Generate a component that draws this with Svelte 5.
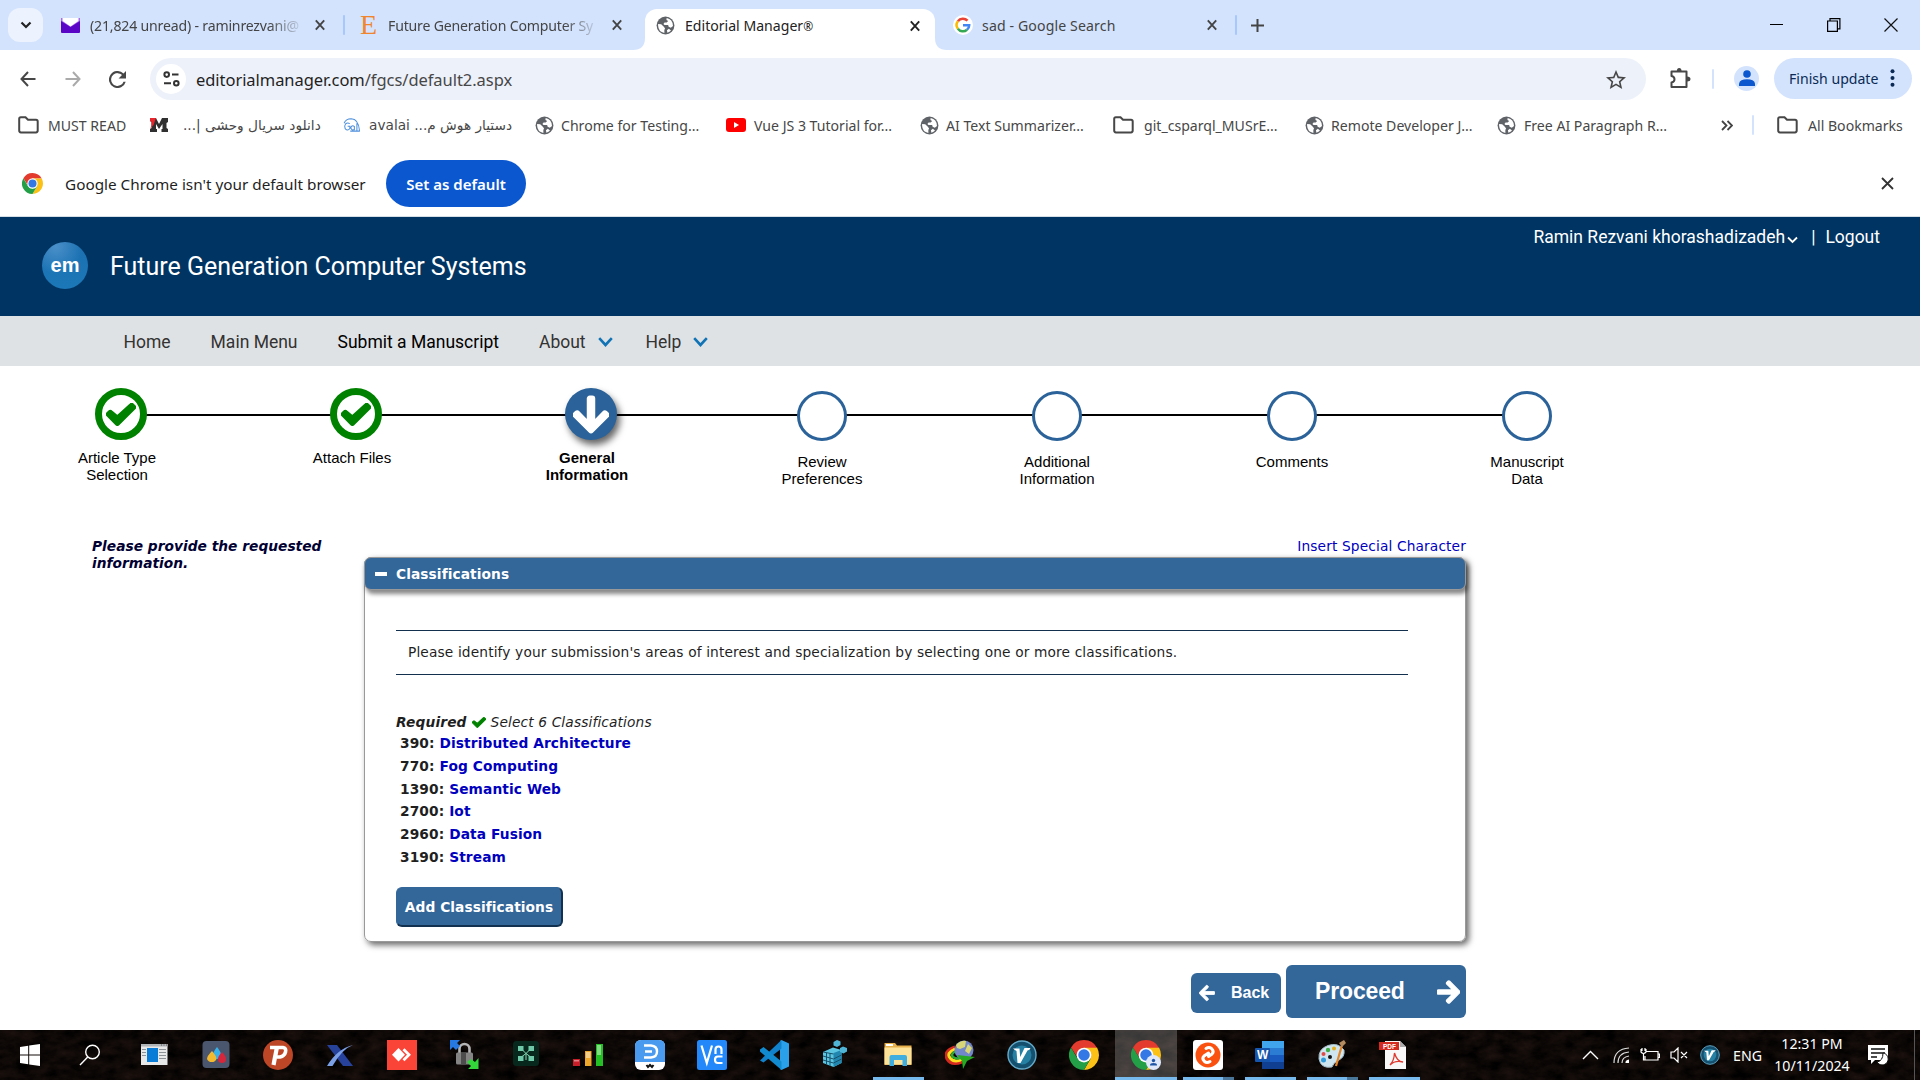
<script>
  const bookmarks = [
    { icon: 'folder', text: 'MUST READ', slot: 30 },
    { icon: 'm', text: 'دانلود سریال وحشی |...', slot: 33, rtl: true },
    { icon: 'gai', text: 'دستیار هوش م... avalai', slot: 27, rtl: true },
    { icon: 'globe', text: 'Chrome for Testing...', slot: 26 },
    { icon: 'youtube', text: 'Vue JS 3 Tutorial for...', slot: 28 },
    { icon: 'globe', text: 'AI Text Summarizer...', slot: 26 },
    { icon: 'folder', text: 'git_csparql_MUSrE...', slot: 31 },
    { icon: 'globe', text: 'Remote Developer J...', slot: 26 },
    { icon: 'globe', text: 'Free AI Paragraph R...', slot: 27 }
  ];

  const steps = [
    { state: 'done', lines: ['Article Type', 'Selection'] },
    { state: 'done', lines: ['Attach Files'] },
    { state: 'current', lines: ['General', 'Information'] },
    { state: 'todo', lines: ['Review', 'Preferences'] },
    { state: 'todo', lines: ['Additional', 'Information'] },
    { state: 'todo', lines: ['Comments'] },
    { state: 'todo', lines: ['Manuscript', 'Data'] }
  ];

  const classes = [
    ['390', 'Distributed Architecture'],
    ['770', 'Fog Computing'],
    ['1390', 'Semantic Web'],
    ['2700', 'Iot'],
    ['2960', 'Data Fusion'],
    ['3190', 'Stream']
  ];

  const apps = [
    { icon: 'window' },
    { icon: 'drops' },
    { icon: 'psiphon' },
    { icon: 'xmanager' },
    { icon: 'anydesk' },
    { icon: 'lock' },
    { icon: 'network' },
    { icon: 'bars' },
    { icon: 'dict' },
    { icon: 'vnc' },
    { icon: 'code' },
    { icon: 'cubes' },
    { icon: 'explorer', run: true },
    { icon: 'idm' },
    { icon: 'v' },
    { icon: 'chrome' },
    { icon: 'chromeuser', active: true },
    { icon: 'orange', run: true, multi: true },
    { icon: 'word', run: true },
    { icon: 'paint', run: true, multi: true },
    { icon: 'pdf', run: true }
  ];
</script>

{#snippet chromeLogo()}
  <path d="M1.600 6 7 14.500 12 6.300H22.500A12 12 0 0 0 1.600 6Z" fill="#e33b2e" />
  <path d="M12 6.200H22.500A12 12 0 0 1 12 24L17.200 15Z" fill="#fbc116" />
  <path d="M1.600 6 6.900 15 12 17.800 17.200 15 12 24A12 12 0 0 1 1.600 6Z" fill="#23a047" />
  <circle cx="12" cy="12" r="5.900" fill="#fff" />
  <circle cx="12" cy="12" r="4.600" fill="#3478e5" />
{/snippet}

{#snippet arrow()}
  <path fill="#fff" stroke="#fff" stroke-width="26" d="M413.1 222.5l22.2 22.2c9.4 9.4 9.4 24.6 0 33.9L241 473c-9.4 9.4-24.6 9.4-33.9 0L12.7 278.6c-9.4-9.4-9.4-24.6 0-33.9l22.2-22.2c9.5-9.5 25-9.3 34.3.4L184 343.4V56c0-13.3 10.7-24 24-24h32c13.3 0 24 10.7 24 24v287.4l114.8-120.5c9.3-9.800 24.8-10 34.3-.4z" />
{/snippet}

{#snippet check()}
  <svg class="check" viewBox="-8 58 528 398" fill="#008200" stroke="#008200" stroke-width="40"><path d="M173.898 430l-160-160c-9.997-9.997-9.997-22 0-32l36.203-36.204c9.997-9.998 26.207-9.998 36.204 0L192 290 425 78c9.997-9.997 26.207-9.997 36.204 0l36.203 36.204c9.997 9.997 9.997 22 0 32L210.101 430c-9.998 9.997-26.207 9.997-36.204 0z" /></svg>
{/snippet}

{#snippet cross()}
  <svg width="10" height="12" viewBox="0 0 10 12"><path d="M.8 1.400 9.200 10.600M9.200 1.400.8 10.600" stroke="currentColor" stroke-width="1.900" /></svg>
{/snippet}

{#snippet small(name)}
  {#if name === 'folder'}
    <svg width="21" height="18" viewBox="0 0 21 18" fill="none" stroke="#474747" stroke-width="2"><path d="M1.200 2.800Q1.200 1.200 2.800 1.200H7.500L10 3.800H18Q19.700 3.800 19.700 5.400V14.600Q19.700 16.400 18 16.400H2.900Q1.200 16.400 1.200 14.600Z" /></svg>
  {:else if name === 'globe'}
    <svg width="19" height="19" viewBox="0 0 20 20"><circle cx="10" cy="10" r="9.400" fill="#5f6368" /><path d="M2.200 8.300 5.500 8.600 8.500 11.600 9.600 13.500 8.800 14.500V17.800Q2.500 16.800 2.200 10ZM11.200 2.100Q17.500 3.200 17.900 10.400L15.600 12.400 13.300 11.400 12.800 9.600H9L7.800 8.400 9 6.800H11.200L12.800 5.300 11 4.200ZM13.500 13.500 15.800 15.300Q14.500 16.800 12 17.600L11.500 15Z" fill="#fff" /></svg>
  {:else if name === 'm'}
    <svg width="18" height="14" viewBox="0 0 18 14"><path d="M0 0H6L9 6 12 0H18V4L16.500 5V10L18 11V14H11.500V11H12.500V6L9 11 6 6V11H7V14H0V11L1.500 10V4L0 3Z" fill="#303030" /><path d="M0 0H6L3.500 7 0 11 1.500 8V4L0 3Z" fill="#e8262b" /></svg>
  {:else if name === 'gai'}
    <svg width="20" height="14" viewBox="0 0 20 16" fill="none" stroke="#4f90dc" stroke-width="1.200"><path d="M7.500 6.500Q5 4.800 2.800 6.600 .8 9 2.200 12.200 5 15.400 7.600 12V9.500H5M1 6Q3 .8 9 .8 17.500 1 18.600 14.500M12.500 9.500A2.300 2.300 0 1 0 12.500 13M12.700 9V14M15.600 6V14.500M8 15H19" /></svg>
  {:else if name === 'youtube'}
    <svg width="20" height="14" viewBox="0 0 20 14"><rect width="20" height="14" rx="3" fill="#f00" /><path d="M8 4 13 7 8 10Z" fill="#fff" /></svg>
  {/if}
{/snippet}

{#snippet app(name)}
  <svg width="30" height="30" viewBox="0 0 30 30">
    {#if name === 'window'}
      <path d="M2 4H28.500V25H2Z" fill="#e8e8e8" /><path d="M2 4H28.500V6.500H2Z" fill="#b0b3b6" /><path d="M22 5H23M24.500 5H25.500M27 5H28" stroke="#555" /><path d="M3 9.500H7M3 12.500H7M3 15.500H7M20 9.500H27M20 12.500H27M20 15.500H27M20 18.500H27" stroke="#8d9297" stroke-width="1.200" /><rect x="8" y="8" width="11" height="14" fill="#087cd7" />
    {:else if name === 'drops'}
      <rect x="1.500" y="1" width="27" height="27" rx="4" fill="#4a566d" /><path d="M16 7Q20 12 20 15A4 4 0 0 1 12 15Q12 12 16 7" fill="#36b1ea" /><path d="M21 12Q25 16 25 19A4 4 0 0 1 17 19Q17 16 21 12" fill="#d5263b" /><path d="M11 11Q15.500 16 15.500 19A5 4.500 0 0 1 6 19Q6 16 11 11" fill="#f3b92f" />
    {:else if name === 'psiphon'}
      <circle cx="15" cy="15" r="15" fill="#bd4627" /><path d="M7 7.500H20Q23.500 8 22.500 12T17 17H14" fill="none" stroke="#fff" stroke-width="3.600" /><path d="M14 7 10.500 25" stroke="#fff" stroke-width="4.200" />
    {:else if name === 'xmanager'}
      <path d="M2 5H12L28 26H18Z" fill="#27429a" /><path d="M28 5Q17 9 7.500 26H2Q12 9 28 5" fill="#7ba0e8" />
    {:else if name === 'anydesk'}
      <path d="M0 0H30V30H0Z" fill="#fb4438" /><path d="M11.500 8 18 14.700 11.500 21.400 5 14.700Z" fill="#fff" /><path d="M16.500 9.200 22 14.700 16.500 20.200" stroke="#fff" stroke-width="2.800" fill="none" />
    {:else if name === 'lock'}
      <path d="M10.500 13V9A5 5 0 0 1 20.500 9V13" fill="none" stroke="#b5b5b5" stroke-width="2.600" /><rect x="7" y="12.500" width="17" height="12" rx="1.500" fill="#848484" /><path d="M12 12.500H17V24.500H12Z" fill="#4d4d4d" /><path d="M1 0H11L8 3 11 6 7 10 4 7 1 10Z" fill="#2679e3" /><path d="M29.500 29H19L22 26 18 22 22 19 26 22 29.500 18Z" fill="#34d73b" />
    {:else if name === 'network'}
      <rect x="2" y="1" width="26" height="25" rx="3.500" fill="#06281d" /><path d="M10 8.500 15 13.500 20 8.500M15 13.500V20M9 18 15 13.500 21 18" stroke="#85d9b6" fill="none" /><path d="M7 6H12.500V11H7ZM17.500 6H23V11H17.500ZM7 16H12.500V21H7ZM17.500 16H23V21H17.500Z" fill="#6fc9a9" />
    {:else if name === 'bars'}
      <path d="M0 19H7V26H0Z" fill="#c81e2a" /><path d="M12 11H18.500V26H12Z" fill="#eea62a" /><path d="M23 4H30V26H23Z" fill="#23bf24" /><path d="M1 20H6V21.500H1ZM13 12H17.500V18H13ZM24 5H28V15H24Z" fill="#ffffff70" />
    {:else if name === 'dict'}
      <rect width="30" height="30" rx="6" fill="#fff" /><path d="M0 22V6Q0 0 6 0H24Q30 0 30 6V22Z" fill="#4a9bef" /><path d="M9 5.500H16Q22 6 22 11.500T16 17.500H9M10 11.500H17" stroke="#fff" stroke-width="2.400" fill="none" /><path d="M11.500 25 13 27 15 25 17 27 18.500 25" stroke="#111" stroke-width="2" fill="none" />
    {:else if name === 'vnc'}
      <rect width="30" height="30" rx="2.500" fill="#2389fa" /><path d="M4.500 5.500 9.800 23 15 5.500M18.500 14V9.500Q18.500 6.500 21.500 6.500T24.500 9.500V14M25.500 16.500H21Q18 16.500 18 19.800T21 23H25.500" stroke="#fff" stroke-width="2.200" fill="none" />
    {:else if name === 'code'}
      <path d="M22.500 0 30 3.500V26.500L22.500 30 21 29V1Z" fill="#2ba0ea" /><path d="M1 20.500 22.500 0V8.500L4.500 22.500Z" fill="#1181cc" /><path d="M1 9.500 4.500 7 22.500 21.500V30L1 11.500Z" fill="#128ad0" />
    {:else if name === 'cubes'}
      <path d="M2 12 12 7.500 20.500 10V23L12.500 27 2 23Z" fill="#5cc6e2" /><path d="M12.500 13 20.500 10V23L12.500 27Z" fill="#2187b1" /><path d="M5.500 13V24M9 13V26M2 16 12.500 19 20.500 15M2 20 12.500 23 20.500 19M2 12 12.500 14" stroke="#16506b" fill="none" /><path d="M12.500 2 16 0 19.500 1.500V5L16 7 12.500 5.500ZM19 8 22 6.500 26 8V11.500L22.500 13.500 19 12Z" fill="#4fb5d6" />
    {:else if name === 'explorer'}
      <path d="M1.500 3H12L14 5.500H28.500V25H1.500Z" fill="#e8b04b" /><path d="M3 4H10V6H3Z" fill="#fff" /><path d="M1.500 7.500H28.500V24.500H1.500Z" fill="#fde39a" /><path d="M6.500 26V17Q6.500 15 8.500 15H22Q24 15 24 17V26H19.500V20H11V26Z" fill="#41aee0" />
    {:else if name === 'idm'}
      <path d="M10 7Q-2 11 2 19 6 26 17 22" stroke="#d52a20" stroke-width="3" fill="none" /><path d="M10 9Q1 13 5 18 9 23 17 19.500" stroke="#ffde22" stroke-width="3" fill="none" /><path d="M11 11Q5 14 8 17 12 20 18 17" stroke="#2cad35" stroke-width="2.500" fill="none" /><circle cx="19" cy="10" r="9.500" fill="#7187c9" /><path d="M11 5Q16 0 21 1L20 7 15 9 12 8ZM23 4 27 8 24 14 20 11Z" fill="#d8d676" /><path d="M12 15 30 17 22 21 18 29 17 21Z" fill="#27a921" />
    {:else if name === 'v'}
      <circle cx="15" cy="15" r="14" fill="#15506f" stroke="#63aac9" stroke-width="1.400" /><circle cx="15" cy="15" r="9.500" fill="#2580a3" /><path d="M6 8.500H12.500L13.200 17 17.500 8H23.500Q23 10 20.500 10.500L13.500 23H10.500L9.500 11Q8 10 6 8.500Z" fill="#fff" />
    {:else if name === 'chrome'}
      <g transform="scale(1.25)">{@render chromeLogo()}</g>
    {:else if name === 'chromeuser'}
      <g transform="scale(1.25)">{@render chromeLogo()}</g><circle cx="22.500" cy="22.500" r="7.500" fill="#dfe8fa" /><circle cx="22.500" cy="20.500" r="1.700" fill="#1f55a5" /><path d="M19 25.500V25Q19 23 22.500 23T26 25V25.500Z" fill="#1f55a5" />
    {:else if name === 'orange'}
      <rect width="30" height="30" rx="3" fill="#fff" /><circle cx="15" cy="15" r="12.500" fill="#fb5110" /><path d="M13 8.500Q16 6.500 18.500 8.500 21.500 11.500 19 14L15.500 16.500M17 21.500Q14 23.500 11.500 21.500 8.500 18.500 11 16L15.500 13" stroke="#fff" stroke-width="3" stroke-linecap="round" fill="none" />
    {:else if name === 'word'}
      <path d="M7 1H29V29H7Z" fill="#2b7cd3" /><path d="M7 1H29V8H7Z" fill="#41a5ee" /><path d="M7 15H29V22H7Z" fill="#185abd" /><path d="M7 22H29V29H7Z" fill="#103f91" /><rect x="0" y="8" width="15" height="14" rx="1" fill="#1655ae" /><text x="2" y="19" fill="#fff" class="word">W</text>
    {:else if name === 'paint'}
      <path d="M2 19Q1 9 11 5.500T27 10Q28 17 22 20T15 27Q4 29 2 19" fill="#cfe5f0" stroke="#a5bcc5" /><circle cx="6.500" cy="14" r="2" fill="#df4c48" /><circle cx="11" cy="10" r="2.200" fill="#41ac47" /><circle cx="6.500" cy="20" r="2.500" fill="#329bdb" /><circle cx="17" cy="8.500" r="2" fill="#e3ae21" /><circle cx="13" cy="17" r="2" fill="#151515" /><path d="M25 5 19 26" stroke="#e28629" stroke-width="2.200" /><path d="M22 3 27 0 29 3 25 7Z" fill="#b58c60" />
    {:else if name === 'pdf'}
      <path d="M6 1H21L27 7V29H6Z" fill="#f8f8f8" /><path d="M21 1V7H27Z" fill="#aaa" /><rect y="2" width="20" height="8" fill="#d32c21" /><text x="4" y="8.500" fill="#fff" class="pdf">PDF</text><path d="M11 25Q15 21 15.500 13 18 22 24 22 16 20 11 25" fill="none" stroke="#df3a30" stroke-width="1.300" />
    {/if}
  </svg>
{/snippet}

<div class="screen">
  <header class="tabs">
    <div class="tabsearch"><svg width="12" height="9" viewBox="0 0 12 9"><path d="M1.500 1.500 6 6 10.500 1.500" fill="none" stroke="#222" stroke-width="2.200" /></svg></div>
    <div class="tab mail">
      <svg width="19" height="15" viewBox="0 0 19 15"><rect width="19" height="15" rx="1" fill="#5b06c6" /><path d="M0 0H19V3L9.500 9 0 3Z" fill="#a767ee" /><path d="M1.500 0H17.500V3L9.500 8.500 1.500 3Z" fill="#fff" /></svg>
      <span class="title fade">(21,824 unread) - raminrezvani@</span>{@render cross()}
    </div>
    <i class="sep"></i>
    <div class="tab elsevier"><span class="e">E</span><span class="title fade">Future Generation Computer Sy</span>{@render cross()}</div>
    <div class="tab front">
      <svg class="curve left" width="12" height="12"><path d="M12 0V12H0Q12 12 12 0" fill="#fff" /></svg>
      {@render small('globe')}<span class="title">Editorial Manager<span class="reg">®</span></span>{@render cross()}
      <svg class="curve right" width="12" height="12"><path d="M0 0V12H12Q0 12 0 0" fill="#fff" /></svg>
    </div>
    <div class="tab google">
      <svg width="20" height="20" viewBox="0 0 20 20"><circle cx="10" cy="10" r="10" fill="#fff" /><g fill="none" stroke-width="2.500"><path d="M4.900 6.200A6.200 6.200 0 0 1 14.500 5.700" stroke="#ea4335" /><path d="M4.900 13.700A6.200 6.200 0 0 1 4.900 6.200" stroke="#fbbc05" /><path d="M14 14.700A6.200 6.200 0 0 1 4.900 13.700" stroke="#34a853" /><path d="M10 10.200H16.200Q16.200 13 14 14.700" stroke="#4285f4" /></g></svg>
      <span class="title wide">sad - Google Search</span>{@render cross()}
    </div>
    <i class="sep"></i>
    <svg class="plus" width="13" height="13" viewBox="0 0 13 13"><path d="M6.500 0V13M0 6.500H13" stroke="#444" stroke-width="2" /></svg>
    <div class="wincontrols">
      <svg width="14" height="14"><path d="M0 6.500H13" stroke="#000" /></svg>
      <svg width="14" height="14" fill="none" stroke="#000" stroke-width="1.200"><path d="M.6 3H10.400V13.400H.6ZM3 3V.6H12.900V10.900H10.400" /></svg>
      <svg width="14" height="14"><path d="M.5.5 13.500 13.500M13.500.5.5 13.500" stroke="#111" stroke-width="1.200" /></svg>
    </div>
  </header>

  <div class="toolbar">
    <svg width="16" height="16" viewBox="0 0 16 16" fill="none" stroke="#474747" stroke-width="2"><path d="M15.500 8H1.500M8 1 1.500 8 8 15" /></svg>
    <svg class="fwd" width="16" height="16" viewBox="0 0 16 16" fill="none" stroke="#aaa" stroke-width="2"><path d="M.5 8H14.500M8 1 14.500 8 8 15" /></svg>
    <svg width="17" height="17" viewBox="4 4 16 16" fill="#474747"><path d="M17.650 6.350A8 8 0 1 0 19.730 14h-2.080A6 6 0 1 1 12 6c1.660 0 3.140.69 4.220 1.780L13 11h7V4z" /></svg>
    <div class="omnibox">
      <span class="site"><svg width="17" height="16" viewBox="0 0 17 16" fill="none" stroke="#333" stroke-width="2"><circle cx="3.700" cy="3.600" r="2.300" /><path d="M9 3.600H15.500M1 12.200H8" /><circle cx="13.300" cy="12.200" r="2.300" /></svg></span>
      <span class="url">editorialmanager.com<em>/fgcs/default2.aspx</em></span>
      <svg class="star" width="20" height="19" viewBox="2 2 20 19" fill="#474747"><path d="M22 9.240l-7.190-.62L12 2 9.190 8.630 2 9.240l5.460 4.730L5.820 21 12 17.270 18.180 21l-1.630-7.030L22 9.240zM12 15.400l-3.760 2.270 1-4.280-3.320-2.880 4.380-.38L12 6.100l1.710 4.040 4.380.38-3.320 2.880 1 4.280L12 15.400z" /></svg>
    </div>
    <svg class="puzzle" width="23" height="22" viewBox="0 0 23 22"><path d="M2.500 4.500H17.500V20H2.500V15.500Q5.500 15 5.500 12.300T2.500 9Z" fill="none" stroke="#474747" stroke-width="2" stroke-linejoin="round" /><path d="M7.800 4Q8 1 10.200 1T12.600 4ZM18 9.500Q21.500 9.500 21.500 12T18 14.500Z" fill="#474747" /></svg>
    <i class="sep pale"></i>
    <span class="avatar"><svg width="16" height="16" viewBox="0 0 16 16" fill="#0b57d0"><circle cx="8" cy="4" r="3.800" /><path d="M0 16V13.500Q1 9.300 8 9.300T16 13.500V16Z" /></svg></span>
    <button class="update">Finish update<svg width="5" height="18" fill="#0a2a55"><circle cx="2.500" cy="2.300" r="2" /><circle cx="2.500" cy="9" r="2" /><circle cx="2.500" cy="15.700" r="2" /></svg></button>
  </div>

  <nav class="bookmarks">
    {#each bookmarks as b}
      <div class="bm"><span class="slot" style:width="{b.slot}px">{@render small(b.icon)}</span><span class:rtl={b.rtl} dir={b.rtl ? 'rtl' : 'ltr'}>{b.text}</span></div>
    {/each}
    <svg class="more" width="12" height="11" viewBox="0 0 12 11" fill="none" stroke="#444" stroke-width="1.800"><path d="M1 1 5.500 5.500 1 10M6.500 1 11 5.500 6.500 10" /></svg>
    <i class="sep pale"></i>
    <div class="bm all"><span class="slot">{@render small('folder')}</span><span>All Bookmarks</span></div>
  </nav>

  <div class="infobar">
    <svg width="21" height="21" viewBox="0 0 24 24">{@render chromeLogo()}</svg>
    <span class="msg">Google Chrome isn't your default browser</span>
    <button>Set as default</button>
    <svg class="close" width="13" height="13"><path d="M1 1 12 12M12 1 1 12" stroke="#333" stroke-width="1.800" /></svg>
  </div>

  <div class="masthead">
    <span class="em">em</span>
    <h1>Future Generation Computer Systems</h1>
    <div class="user"><span class="name">Ramin Rezvani khorashadizadeh</span><svg width="11" height="8" viewBox="0 0 11 8"><path d="M1 1.500 5.500 6 10 1.500" fill="none" stroke="#fff" stroke-width="1.800" /></svg><span class="bar">|</span><span>Logout</span></div>
  </div>

  {#snippet chevron()}
    <svg width="15" height="10" viewBox="0 0 15 10"><path d="M1.200 1.200 7.500 8 13.800 1.200" fill="none" stroke="#0f73b5" stroke-width="2.600" /></svg>
  {/snippet}
  <nav class="menu">
    <span>Home</span><span>Main Menu</span><span class="on">Submit a Manuscript</span><span class="drop">About {@render chevron()}</span><span class="drop">Help {@render chevron()}</span>
  </nav>

  <div class="steps">
    {#each steps as s}
      <div class="step {s.state}">
        <div class="track"><span class="dot">{#if s.state === 'done'}{@render check()}{:else if s.state === 'current'}<svg width="36" height="41" viewBox="0 0 448 512">{@render arrow()}</svg>{/if}</span></div>
        <div class="label">{#each s.lines as l}<div>{l}</div>{/each}</div>
      </div>
    {/each}
  </div>

  <main>
    <aside>Please provide the requested information.</aside>
    <section>
      <div class="special"><a href="#top">Insert Special Character</a></div>
      <div class="panel">
        <div class="phead"><i></i>Classifications</div>
        <div class="pbody">
          <p class="intro">Please identify your submission's areas of interest and specialization by selecting one or more classifications.</p>
          <div class="req"><b>Required</b>{@render check()}<span>Select 6 Classifications</span></div>
          <ul>
            {#each classes as [n, t]}<li>{n}: <a href="#top">{t}</a></li>{/each}
          </ul>
          <button class="add">Add Classifications</button>
        </div>
      </div>
      <div class="actions">
        <button class="back"><svg width="16" height="18" viewBox="0 0 448 512"><g transform="rotate(90 224 256)">{@render arrow()}</g></svg>Back</button>
        <button class="proceed">Proceed<svg width="23" height="26" viewBox="0 0 448 512"><g transform="rotate(-90 224 256)">{@render arrow()}</g></svg></button>
      </div>
    </section>
  </main>

  <footer>
    <svg class="grain" width="1920" height="50"><filter id="leaves" x="0" y="0" width="100%" height="100%" color-interpolation-filters="sRGB"><feTurbulence type="fractalNoise" baseFrequency=".06 .1" numOctaves="4" seed="8" /><feColorMatrix values=".16 0 0 0 -.028  .1 0 0 0 -.018  .08 0 0 0 -.015  0 0 0 0 1" /></filter><rect width="1920" height="50" filter="url(#leaves)" /></svg>
    <div class="cell sys"><svg width="20" height="22" viewBox="0 0 20 20" preserveAspectRatio="none" fill="#fff"><path d="M0 2.800 8.200 1.500V9.500H0ZM9.200 1.300 20 0V9.500H9.200ZM0 10.500H8.200V18.500L0 17.200ZM9.200 10.500H20V20L9.200 18.700Z" /></svg></div>
    <div class="cell sys"><svg width="22" height="22" viewBox="0 0 22 22" fill="none" stroke="#fff" stroke-width="1.400"><circle cx="13.500" cy="8" r="6.800" /><path d="M8.700 13 1 21" /></svg></div>
    <div class="apps">
      {#each apps as a}
        <div class="cell" class:active={a.active} class:run={a.run} class:multi={a.multi}>{@render app(a.icon)}</div>
      {/each}
    </div>
    <div class="tray">
      <svg width="17" height="10"><path d="M1 9 8.500 1.500 16 9" fill="none" stroke="#fff" stroke-width="1.400" /></svg>
      <svg width="17" height="17" fill="none" stroke="#ddd" stroke-width="1.200"><path d="M1 16Q1 2 16 1M5 16Q5 6 16 5M9 16Q9 10 16 9" /><path d="M12.500 16Q12 13 16 12.500V16Z" fill="#fff" stroke="none" /></svg>
      <svg width="20" height="14" fill="none" stroke="#fff" stroke-width="1.200"><path d="M6 3.500H18V12H5V8M18 6H19.500V9.500H18M1 1V4Q3.500 7 6 4V1M3.500 6V12H6M2 0V3M5 0V3" /></svg>
      <svg width="18" height="16" fill="none" stroke="#fff" stroke-width="1.200"><path d="M1 5H4L8 1V15L4 11H1ZM11 5 17 11M17 5 11 11" /></svg>
      <span class="vsmall">{@render app('v')}</span>
      <span class="lang">ENG</span>
      <div class="clock"><div>12:31 PM</div><div>10/11/2024</div></div>
      <svg width="21" height="20" viewBox="0 0 21 20"><path d="M0 0H20V15H7L3 19V15H0Z" fill="#fff" /><path d="M3 4H17M3 8H17M3 12H9" stroke="#111" stroke-width="1.400" /><path d="M15 8A6 6 0 1 1 9 17Q15 16 15 8" fill="#fff" stroke="#111" /></svg>
      <i class="peek"></i>
    </div>
  </footer>
</div>

<style>
  :global(body) { margin: 0; overflow: hidden; }
  .screen { width: 1920px; height: 1080px; display: flex; flex-direction: column; background: #fff; font-family: 'Noto Sans', 'DejaVu Sans', sans-serif; color: #1f1f1f; overflow: hidden; }
  .screen * { box-sizing: border-box; }
  svg { flex: none; display: block; }
  button { border: 0; padding: 0; margin: 0; font: inherit; }
  a { color: #0000be; text-decoration: none; }
  .sep { width: 2px; height: 20px; background: #a8c7fa; border-radius: 1px; flex: none; }
  .pale { background: #d3e3fd; }

  .tabs { height: 50px; flex: none; display: flex; align-items: center; background: #d3e3fd; font-size: 14.100px; color: #444; }
  .tabsearch { width: 35px; height: 34px; margin: 0 18px 0 8px; border-radius: 12px; background: #ecf3fe; display: grid; place-items: center; }
  .tab { display: flex; align-items: center; white-space: nowrap; }
  .title { flex: 1; }
  .wide { letter-spacing: .13px; }
  .fade { letter-spacing: -.18px; mask-image: linear-gradient(90deg, #000 85%, transparent 102%); }
  .mail { width: 264px; gap: 10px; margin-right: 18px; }
  .mail .title, .elsevier .title { margin-right: 5px; }
  .sep + .elsevier { margin-left: 15px; width: 262px; gap: 12px; }
  .e { font: 28px/28px 'Liberation Serif', serif; color: #f0852d; width: 16px; }
  .front { position: relative; width: 290px; height: 41px; margin: 9px 0 0 23px; padding: 0 15px 8px 11px; gap: 10px; background: #fff; border-radius: 12px 12px 0 0; color: #222; }
  .reg { font-size: 12px; }
  .curve { position: absolute; bottom: 0; }
  .left { left: -12px; }
  .right { right: -12px; }
  .google { width: 264px; margin: 0 18px 0 18px; gap: 9px; }
  .plus { margin-left: 14px; }
  .wincontrols { margin: 0 22px 0 auto; display: flex; gap: 43px; }

  .toolbar { height: 58px; flex: none; display: flex; align-items: center; padding-left: 20px; background: #fff; }
  .fwd { margin: 0 28px 0 29px; }
  .omnibox { width: 1496px; height: 42px; margin-left: 24px; padding: 0 20px 0 6px; display: flex; align-items: center; border-radius: 21px; background: #edf1fa; }
  .site { width: 30px; height: 30px; border-radius: 50%; background: #fff; display: grid; place-items: center; }
  .url { margin-left: 10px; flex: 1; font-size: 16.500px; letter-spacing: -.05px; }
  .url em { font-style: normal; color: #474747; }
  .puzzle { margin: -2px 20px 0 23px; }
  .avatar { width: 25px; height: 25px; margin: -2px 15px 0 20px; border-radius: 50%; background: #d3e3fd; display: grid; place-items: center; }
  .update { width: 138px; height: 41px; margin-top: -1px; padding: 0 17px 1px 15px; display: flex; align-items: center; justify-content: space-between; border-radius: 21px; background: #d3e3fd; color: #0a2a55; font-size: 14.100px; white-space: nowrap; }

  .bookmarks { height: 36px; flex: none; display: grid; grid-template-columns: 132px 192px 193px 191px 194px 193px 192px 192px 222px 33px 25px auto; align-items: center; padding: 0 0 2px 18px; color: #474747; font-size: 14.100px; }
  .bm { display: flex; align-items: center; white-space: nowrap; }
  .slot { width: 31px; flex: none; }
  .rtl { font-family: 'DejaVu Sans', sans-serif; font-size: 13.700px; }
  .more { justify-self: start; margin-left: 2px; }

  .infobar { height: 73px; flex: none; display: flex; align-items: center; padding: 7px 26px 0 22px; border-bottom: 1px solid #d5dfe5; font-size: 15.300px; }
  .msg { margin-left: 22px; width: 321px; white-space: nowrap; }
  .infobar button { width: 140px; height: 47px; border-radius: 24px; background: #0b57d0; color: #fff; font-weight: 600; font-size: 15px; }
  .close { margin-left: auto; }

  .masthead { height: 99px; flex: none; display: flex; background: #003462; color: #fff; font-family: Roboto, sans-serif; padding-left: 42px; }
  .em { width: 46px; height: 47px; margin-top: 25px; border-radius: 50%; background: radial-gradient(circle at 30% 10%, #4a90ca, transparent 50%), linear-gradient(#1b6fb0, #1c78b8); font: 700 20px/46px 'Liberation Sans', sans-serif; text-align: center; }
  h1 { margin: 35px 0 0 22px; font-weight: 400; font-size: 25px; line-height: 30px; }
  .user { margin: 9px 40px 0 auto; display: flex; height: 22px; align-items: center; font-size: 17.500px; }
  .user svg { margin: 6px 0 0 2px; }
  .bar { margin: 0 10px 0 13px; }

  .menu { height: 50px; flex: none; display: flex; align-items: center; gap: 40px; padding: 2px 0 0 123.500px; background: #dfe2e4; color: #333; font: 17.500px Roboto, sans-serif; }
  .on { color: #000; }
  .drop { display: flex; align-items: center; gap: 12px; margin-right: -7px; }

  .steps { height: 164px; flex: none; display: flex; padding: 22px 0 0 121px; font: 15px/17px 'Liberation Sans', sans-serif; color: #000; }
  .step { width: 235px; }
  .step:last-child { width: 52px; }
  .track { height: 61px; background: linear-gradient(#000, #000) 0 26px / 100% 2px no-repeat; }
  .step:last-child .track { background: none; }
  .dot { width: 52px; height: 52px; margin-left: -26px; border-radius: 50%; display: grid; place-items: center; background: #fff; }
  .done .dot { border: 7px solid #008200; }
  .dot :global(.check) { width: 30px; height: 23px; }
  .current { width: 231px; font-weight: 700; }
  .current .dot { background: #2a6299; box-shadow: 3px 5px 7px #0009; }
  .todo .track { height: 65px; }
  .todo .dot { width: 50px; height: 50px; margin-left: -25px; border: 3px solid #2a6299; position: relative; top: 3px; }
  .label { width: 140px; margin-left: -74px; text-align: center; }
  .todo .label { margin-left: -70px; }

  main { height: 500px; flex: none; display: flex; padding: 8px 0 0 92px; font: 13.750px/17px 'DejaVu Sans', sans-serif; letter-spacing: .13px; }
  aside { width: 272px; font-weight: 700; font-style: italic; color: #000033; letter-spacing: .02px; }
  section { width: 1102px; }
  .special { text-align: right; height: 19px; }
  .panel { height: 385px; border: 1px solid #999; border-radius: 7px; box-shadow: 3px 3px 6px #0009; }
  .phead { height: 33px; margin: -1px; padding: 1px 0 0 10px; display: flex; align-items: center; color: #fff; background: #336699; border: 1px solid #999; border-radius: 7px; box-shadow: 2px 4px 4px #0007; font-weight: 700; letter-spacing: .08px; }
  .phead i { width: 12px; height: 4px; margin-right: 9px; background: #fff; }
  .pbody { padding: 41px 31px 0; }
  .intro { width: 1012px; height: 45px; margin: 0 0 39px; padding: 0 12px; border: solid #13304f; border-width: 1px 0; line-height: 43px; white-space: nowrap; }
  .req { display: flex; align-items: center; height: 17px; font-style: italic; white-space: nowrap; }
  .req :global(.check) { width: 14px; height: 11px; margin: 0 5px 0 5px; }
  ul { list-style: none; padding: 0 0 0 4px; margin: 2px 0 0; font-weight: 700; letter-spacing: .1px; }
  li { height: 22.800px; line-height: 20px; }
  .add { width: 167px; height: 40px; margin-top: 17px; padding-top: 2px; border-radius: 6px; border: 1px solid #336699; border-right: 2px solid #12304f; border-bottom: 2px solid #12304f; background: #336699; color: #fff; font: 700 13.750px 'DejaVu Sans', sans-serif; letter-spacing: .07px; white-space: nowrap; }
  .actions { display: flex; justify-content: flex-end; align-items: center; gap: 5px; margin-top: 23px; letter-spacing: 0; }
  .actions button { display: flex; align-items: center; background: #336699; color: #fff; font: 700 16px 'Liberation Sans', sans-serif; }
  .actions .back { width: 90px; height: 40px; padding: 1px 0 0 8px; gap: 16px; border-radius: 6px; margin-top: 2px; }
  .actions .proceed { width: 180px; height: 53px; padding: 0 6px 0 29px; justify-content: space-between; border-radius: 6px; font-size: 23px; letter-spacing: -.15px; }

  footer { position: relative; height: 50px; flex: none; display: flex; background: #0e0a07; color: #fff; }
  .grain { position: absolute; left: 0; top: 0; }
  footer > div { position: relative; }
  .cell { width: 62px; height: 50px; display: grid; place-items: center; }
  .sys { width: 60px; }
  .apps { display: flex; margin-left: 3px; }
  .active { background: #ffffff38; border-bottom: 3px solid #76b9ed; padding-top: 3px; }
  .run { background: linear-gradient(#76b9ed, #76b9ed) 6px 47px / 51px 3px no-repeat; }
  .multi { background: linear-gradient(90deg, #76b9ed 40px, #4a7699 40px) 6px 47px / 51px 3px no-repeat; }
  .word { font: 700 12px 'Liberation Sans', sans-serif; }
  .pdf { font: 700 6.500px 'Liberation Sans', sans-serif; }
  .tray { flex: 1; display: flex; align-items: center; margin-left: 157px; font-size: 14.200px; }
  .tray > svg:nth-child(2) { margin: 0 10px 0 14px; }
  .tray > svg:nth-child(4) { margin: 0 12px 0 10px; }
  .vsmall { width: 20px; }
  .vsmall :global(svg) { width: 20px; height: 20px; }
  .lang { width: 28px; margin-left: 13px; }
  .clock { width: 76px; margin: 0 18px 0 13px; text-align: center; line-height: 22px; }
  .peek { margin-left: auto; margin-right: 5px; width: 1px; height: 50px; background: #555; }
</style>
